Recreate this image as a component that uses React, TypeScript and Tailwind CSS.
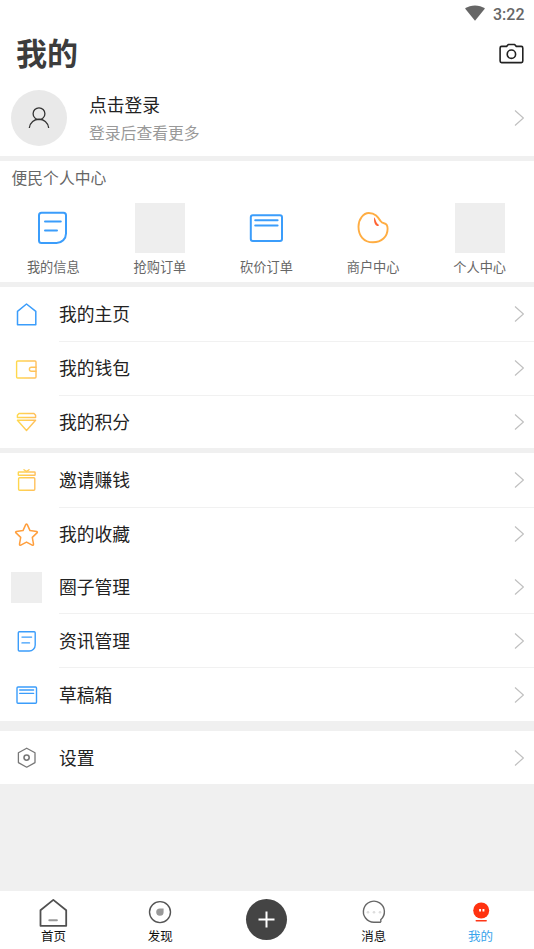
import type { ReactNode } from "react";

interface IIconProps {
  size: number;
  children: ReactNode;
  stroke?: string;
  width?: number;
}

const Icon = ({ size, children, stroke = "#3b9dfb", width = 1.4 }: IIconProps) => (
  <svg
    width={size}
    height={size}
    viewBox={`0 0 ${size} ${size}`}
    fill="none"
    stroke={stroke}
    strokeWidth={width}
    strokeLinecap="round"
    strokeLinejoin="round"
    className="shrink-0"
  >
    {children}
  </svg>
);

const Chevron = () => (
  <svg width="10" height="16" viewBox="0 0 10 16" fill="none" stroke="#c0c0c0" strokeWidth="1.2">
    <path d="M1 .5 9.400 8 1 15.500" />
  </svg>
);

const shortcuts = [
  {
    label: "我的信息",
    icon: (
      <Icon size={50} width={2}>
        <path d="M13.500 9.800h22a2.500 2.500 0 0 1 2.500 2.500v18.200a9.500 9.500 0 0 1-9.500 9.500h-15a2.500 2.500 0 0 1-2.500-2.500V12.300a2.500 2.500 0 0 1 2.500-2.500Z" />
        <path d="M17 18.400h15.800M17 27.400h12" />
      </Icon>
    ),
  },
  { label: "抢购订单" },
  {
    label: "砍价订单",
    icon: (
      <Icon size={50} width={2}>
        <rect x="9.800" y="12.300" width="31.200" height="25.800" rx="2" />
        <path d="M14.200 17.300h22.400M14.200 22.600h22.400" />
      </Icon>
    ),
  },
  {
    label: "商户中心",
    icon: (
      <Icon size={50} width={1.9} stroke="#ffad42">
        <path d="M20.800 10c6.500 0 9.200 4.200 11.700 8 1 1.500 2 2 3.500 2.200 2.500.4 3.600 2.800 3.600 5.500C39.600 33.600 33.500 39.300 25 39.300 15.500 39.300 10.500 32.500 10.500 23.700 10.500 16 15.500 10 20.800 10Z" />
        <path d="M26.200 14.200c2 2.500 1.500 5.500 4.600 7.500.4 1-.8 1.600-2 1.100-2.300-1.300-3.200-5-2.600-8.600Z" fill="#ff6333" stroke="none" />
      </Icon>
    ),
  },
  { label: "个人中心" },
];

const groups = [
  [
    {
      label: "我的主页",
      row: "h-[55px] border-b pb-px",
      icon: (
        <Icon size={31} width={1.5}>
          <path d="M6.500 12.300 15.500 5l9.300 7.300v13.500H6.500Z" />
        </Icon>
      ),
    },
    {
      label: "我的钱包",
      row: "h-[54px] border-b pb-[2px]",
      icon: (
        <Icon size={31} stroke="url(#gold)">
          <rect x="5.600" y="7" width="19.400" height="17" rx="1" />
          <path d="M25 13.300h-4.600a2 2 0 0 0 0 4H25" />
        </Icon>
      ),
    },
    {
      label: "我的积分",
      row: "h-[52px] pb-px",
      icon: (
        <Icon size={31} stroke="url(#gold)">
          <path d="M8 6.500h15l1.600 1.800v2.200H6.400V8.300ZM6.400 13.200h18.200L15.500 23.500Z" />
        </Icon>
      ),
    },
  ],
  [
    {
      label: "邀请赚钱",
      row: "h-[55px] border-b pb-px",
      icon: (
        <Icon size={31} stroke="url(#gold)">
          <path d="m13 4.700 2.500 1.800L18 4.700" />
          <rect x="7.300" y="7" width="16.800" height="3.300" rx=".6" />
          <rect x="7.600" y="12.700" width="16.200" height="12.500" rx="1" />
        </Icon>
      ),
    },
    {
      label: "我的收藏",
      row: "h-[52px] pb-px",
      icon: (
        <Icon size={31} stroke="#ff9f3d" width={1.5}>
          <path d="M14.700 5.600q.8-1.200 1.600 0l2.700 6 6.700.9q1.200.4.300 1.400l-4.700 4.500 1.200 6.800q0 1.400-1.300.9l-5.700-3-5.700 3q-1.300.5-1.300-.9l1.200-6.800L5 13.900q-.9-1 .3-1.400l6.700-.9Z" />
        </Icon>
      ),
    },
    { label: "圈子管理", row: "h-[54px] border-b" },
    {
      label: "资讯管理",
      row: "h-[54px] border-b",
      icon: (
        <Icon size={31}>
          <path d="M8.300 5.700h14.900a1 1 0 0 1 1 1v12.300a6 6 0 0 1-6 6H8.300a1 1 0 0 1-1-1V6.700a1 1 0 0 1 1-1Z" />
          <path d="M11 11.100h9.600M11 16.900h7.500" />
        </Icon>
      ),
    },
    {
      label: "草稿箱",
      row: "h-[53px]",
      icon: (
        <Icon size={31}>
          <rect x="6" y="8" width="19.500" height="16.300" rx="1" />
          <path d="M8.700 11h13.900M8.700 14.400h13.900" />
        </Icon>
      ),
    },
  ],
  [
    {
      label: "设置",
      row: "h-[53px]",
      icon: (
        <Icon size={31} stroke="#777" width={1.3}>
          <path d="m15.700 6.200 8.300 4.600v9.800l-8.300 4.600-8.300-4.600v-9.800Z" />
          <circle cx="15.600" cy="15.600" r="2.600" strokeWidth="1.600" />
        </Icon>
      ),
    },
  ],
];

const tabs = [
  {
    label: "首页",
    icon: (
      <Icon size={32} stroke="#505050" width={1.8}>
        <path d="M3.500 14.200 16.300 3.900l12.900 10.300v15.600H3.500Z" />
        <path d="M12.300 24.300h7.600" stroke="#999" strokeWidth="2" />
      </Icon>
    ),
  },
  {
    label: "发现",
    icon: (
      <Icon size={32} stroke="#555" width={1.4}>
        <circle cx="16" cy="16.100" r="10.500" />
        <path d="M19.600 12.400v3.800a3.700 3.700 0 1 1-3.700-3.800Z" fill="#999" stroke="none" />
      </Icon>
    ),
  },
  { label: "" },
  {
    label: "消息",
    icon: (
      <Icon size={32} stroke="#666" width={1.4}>
        <path d="M22.700 23.700A10.500 10.500 0 1 0 16 26.200h6.400q.9-.7.300-2.500Z" />
        <g fill="#ddd" stroke="none">
          <circle cx="10" cy="16.300" r="1.300" />
          <circle cx="16" cy="16.300" r="1.300" />
          <circle cx="22" cy="16.300" r="1.300" />
        </g>
      </Icon>
    ),
  },
  {
    label: "我的",
    active: true,
    icon: (
      <Icon size={32} stroke="#ff3617" width={1.4}>
        <circle cx="16.200" cy="14.500" r="8" fill="#ff3210" stroke="none" />
        <path d="M11.200 24.800h10" />
        <path d="M14.100 13.100h1.900v2.400h-1.900zM17.500 13.100h1.900v2.400h-1.900z" fill="#fff" stroke="none" />
      </Icon>
    ),
  },
];

const App = () => {
  return (
    <div className="flex h-[949px] w-[534px] flex-col overflow-hidden bg-[#f0f0f0] font-['Noto_Sans_CJK_SC',sans-serif] text-[#222] antialiased">
      <svg width="0" height="0" className="absolute">
        <linearGradient id="gold" gradientUnits="userSpaceOnUse" x1="6" y1="0" x2="25" y2="0">
          <stop stopColor="#ffd84d" />
          <stop offset="1" stopColor="#ffbf5c" />
        </linearGradient>
      </svg>

      {/* header */}
      <header className="h-[156px] shrink-0 bg-white">
        <div className="flex h-7 items-center justify-end gap-2 pr-[9.5px]">
          <svg width="20" height="16" viewBox="0 0 20 16" className="-mt-0.5" fill="#666">
            <path d="M0 3.600C5.800-.7 14.200-.7 20 3.600L10 15.700Z" />
          </svg>
          <span className="pt-px font-[Roboto,sans-serif] text-base font-medium text-[#666]">3:22</span>
        </div>
        <div className="flex h-[51px] items-center justify-between pr-[10px] pl-4">
          <h1 className="pb-[5px] text-[31px] leading-none font-bold text-[#3c3c3c]">我的</h1>
          <svg width="25" height="21" viewBox="0 0 25 21" fill="none" stroke="#222" strokeWidth="1.600" strokeLinejoin="round">
            <path d="M2.600 3.400h5l1.700-1.900h6.300l1.700 1.900h5q1.500 0 1.500 1.500v13.200q0 1.500-1.500 1.500H2.600q-1.500 0-1.500-1.500V4.900q0-1.500 1.500-1.500Z" />
            <circle cx="12.400" cy="11.200" r="4.200" />
          </svg>
        </div>
        <div className="flex h-[77px] items-center pr-[10px] pl-[11px]">
          <div className="flex size-14 items-center justify-center rounded-full bg-[#e9e9e9]">
            <svg width="22" height="22" viewBox="0 0 22 22" fill="none" stroke="#333" strokeWidth="1.300">
              <circle cx="11" cy="6.700" r="5.900" />
              <path d="M1.300 21C2.500 9.300 19.500 9.300 20.700 21" />
            </svg>
          </div>
          <div className="ml-[22px] flex-1 pt-px">
            <p className="text-[17.8px] leading-[28px]">点击登录</p>
            <p className="pt-px text-[15.8px] leading-[28px] text-[#999]">登录后查看更多</p>
          </div>
          <Chevron />
        </div>
      </header>

      {/* shortcuts */}
      <section className="mt-[5px] h-[121px] shrink-0 bg-white">
        <h2 className="h-[42px] pl-[11.5px] text-[15.8px] leading-[34px] text-[#666]">便民个人中心</h2>
        <div className="grid grid-cols-5 pr-px">
          {shortcuts.map((item) => (
            <div key={item.label} className="flex flex-col items-center">
              {item.icon ?? <div className="size-[50px] bg-[#eee]" />}
              <span className="text-[13.2px] leading-[28px] text-[#666]">{item.label}</span>
            </div>
          ))}
        </div>
      </section>

      {/* menu groups */}
      {groups.map((group, index) => (
        <section key={index} className={`shrink-0 bg-white ${index === 2 ? "mt-[10px]" : "mt-[5px]"}`}>
          {group.map((item) => (
            <div key={item.label} className="flex pl-[11px]">
              <div className="flex w-12 items-center">
                {item.icon ?? <div className="size-[31px] bg-[#eee]" />}
              </div>
              <div className={`flex flex-1 items-center justify-between border-[#f1f1f1] pr-[10px] ${item.row}`}>
                <span className="text-[17.8px] leading-none">{item.label}</span>
                <Chevron />
              </div>
            </div>
          ))}
        </section>
      ))}

      {/* bottom tabs */}
      <nav className="mt-auto grid h-[58px] shrink-0 grid-cols-5 bg-white">
        {tabs.map((tab) =>
          tab.icon ? (
            <div key={tab.label} className="flex flex-col items-center pt-[5px]">
              {tab.icon}
              <span className={`text-[12.5px] leading-[15px] ${tab.active ? "text-[#39a4ec]" : "text-[#111]"}`}>
                {tab.label}
              </span>
            </div>
          ) : (
            <div key="add" className="flex items-center justify-center pb-px">
              <div className="flex size-[41px] items-center justify-center rounded-full bg-[#444]">
                <svg width="17" height="17" viewBox="0 0 17 17" stroke="#fff" strokeWidth="2">
                  <path d="M8.500.5v16M.5 8.500h16" />
                </svg>
              </div>
            </div>
          ),
        )}
      </nav>
    </div>
  );
};

export default App;
